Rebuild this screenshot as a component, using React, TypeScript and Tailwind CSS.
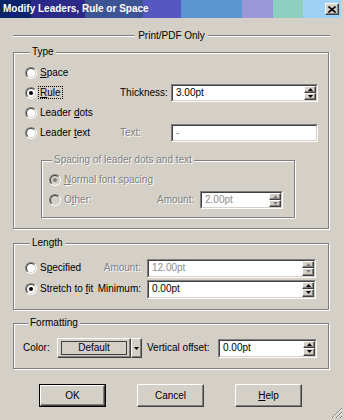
import type { ReactNode } from 'react';

const raised =
  'border border-t-white border-l-white border-r-[#404040] border-b-[#404040] bg-[#d4d0c8] shadow-[inset_-1px_-1px_0_#808080]';
const dim = 'text-[#808080] [text-shadow:1px_1px_0_#fff]';
const etched = 'border border-[#808080] shadow-[1px_1px_0_#fff,inset_1px_1px_0_#fff]';

function Radio({ checked = false, disabled = false }: { checked?: boolean; disabled?: boolean }) {
  return (
    <span className="flex h-[12px] w-[12px] shrink-0 items-center justify-center rounded-full border border-t-[#808080] border-l-[#808080] border-r-white border-b-white">
      <span
        className={`flex h-[10px] w-[10px] items-center justify-center rounded-full border border-t-[#404040] border-l-[#404040] border-r-[#d4d0c8] border-b-[#d4d0c8] ${
          disabled ? 'bg-[#d4d0c8]' : 'bg-white'
        }`}
      >
        {checked && <span className={`h-[4px] w-[4px] rounded-full ${disabled ? 'bg-[#808080]' : 'bg-black'}`} />}
      </span>
    </span>
  );
}

function Arrow({ up = false, disabled = false }: { up?: boolean; disabled?: boolean }) {
  return (
    <svg width="5" height="3" viewBox="0 0 5 3">
      <polygon points={up ? '0,3 5,3 2.5,0' : '0,0 5,0 2.5,3'} fill={disabled ? '#808080' : '#000'} />
    </svg>
  );
}

function Spinner({ disabled = false }: { disabled?: boolean }) {
  return (
    <div className="flex h-full w-[12px] shrink-0 flex-col">
      <div className={`flex flex-1 items-center justify-center ${raised}`}>
        <Arrow up disabled={disabled} />
      </div>
      <div className={`flex flex-1 items-center justify-center ${raised}`}>
        <Arrow disabled={disabled} />
      </div>
    </div>
  );
}

function Field({
  value,
  className,
  disabled = false,
  spin = true,
}: {
  value: string;
  className: string;
  disabled?: boolean;
  spin?: boolean;
}) {
  return (
    <div className={`flex shrink-0 border border-t-[#808080] border-l-[#808080] border-r-white border-b-white ${className}`}>
      <div className="flex min-w-0 flex-1 items-center border border-t-[#404040] border-l-[#404040] border-r-[#d4d0c8] border-b-[#d4d0c8] bg-white">
        <span className={`flex-1 pl-[3px] ${disabled ? 'text-[#8c8c8c]' : 'text-black'}`}>{value}</span>
        {spin && <Spinner disabled={disabled} />}
      </div>
    </div>
  );
}

function Option({
  children,
  checked,
  disabled,
  className,
}: {
  children: ReactNode;
  checked?: boolean;
  disabled?: boolean;
  className: string;
}) {
  return (
    <label className={`flex shrink-0 items-center gap-[3px] ${className}`}>
      <Radio checked={checked} disabled={disabled} />
      <span className={disabled ? dim : ''}>{children}</span>
    </label>
  );
}

function Button({ children, isDefault = false }: { children: ReactNode; isDefault?: boolean }) {
  return (
    <div className={`h-[23px] w-[67px] ${isDefault ? 'border border-black' : ''}`}>
      <div className={`flex h-full w-full items-center justify-center ${raised}`}>{children}</div>
    </div>
  );
}

export default function App() {
  return (
    <div className="relative flex h-[420px] w-[344px] flex-col bg-[#d4d0c8] font-['Liberation_Sans',Arial,sans-serif] text-[10px] leading-[12px] text-black">
      <div className="flex h-[18px] w-[341px] items-center justify-between bg-[linear-gradient(90deg,#0a246a_0%,#0a246a_9%,#2b2a8a_9%,#2b2a8a_25%,#3d5494_25%,#3d5494_42%,#5458c0_42%,#5458c0_53%,#5b95d2_53%,#5b95d2_71%,#9a98d8_71%,#9a98d8_80%,#8ecfc0_80%,#8ecfc0_89%,#9fd0f6_89%,#9fd0f6_100%)] pl-[3px] pr-[2px]">
        <span className="font-bold text-white">Modify Leaders, Rule or Space</span>
        <div className={`flex h-[12px] w-[14px] items-center justify-center ${raised}`}>
          <svg width="8" height="7" viewBox="0 0 8 7">
            <path d="M0.5 0.5 L7.5 6.5 M7.5 0.5 L0.5 6.5" stroke="#000" strokeWidth="1.6" />
          </svg>
        </div>
      </div>

      <div className="ml-[13px] mt-[12px] flex h-[12px] w-[317px] items-center">
        <div className="h-[2px] flex-1 border-t border-b border-t-[#808080] border-b-white" />
        <span className="px-[3px]">Print/PDF Only</span>
        <div className="h-[2px] flex-1 border-t border-b border-t-[#808080] border-b-white" />
      </div>

      <fieldset className={`ml-[13px] mt-[4px] w-[316px] pb-[10px] pl-[11px] pt-[5px] ${etched}`}>
        <legend className="ml-[5px] h-[12px] bg-[#d4d0c8] px-[2px]">Type</legend>
        <div className="flex h-[20px] items-center">
          <Option className="w-[95px]">
            <u>S</u>pace
          </Option>
        </div>
        <div className="flex h-[20px] items-center">
          <Option className="w-[95px]" checked>
            <span className="-mx-[2px] border border-dotted border-black px-[1px]">
              <u>R</u>ule
            </span>
          </Option>
          <span className="w-[51px]">Thickness:</span>
          <Field value="3.00pt" className="h-[18px] w-[147px]" />
        </div>
        <div className="flex h-[20px] items-center">
          <Option className="w-[95px]">
            Leader <u>d</u>ots
          </Option>
        </div>
        <div className="flex h-[20px] items-center">
          <Option className="w-[95px]">
            Leader <u>t</u>ext
          </Option>
          <span className={`w-[51px] ${dim}`}>Text:</span>
          <Field value="-" className="h-[18px] w-[147px]" disabled spin={false} />
        </div>

        <fieldset className={`ml-[16px] mt-[11px] w-[254px] pb-[7px] pl-[7px] pt-[4px] ${etched}`}>
          <legend className={`ml-[3px] h-[12px] bg-[#d4d0c8] px-[2px] ${dim}`}>Spacing of leader dots and text</legend>
          <div className="flex h-[20px] items-center">
            <Option className="w-[108px]" checked disabled>
              <u>N</u>ormal font spacing
            </Option>
          </div>
          <div className="flex h-[20px] items-center">
            <Option className="w-[108px]" disabled>
              O<u>t</u>her:
            </Option>
            <span className={`w-[43px] ${dim}`}>Amount:</span>
            <Field value="2.00pt" className="h-[18px] w-[83px]" disabled />
          </div>
        </fieldset>
      </fieldset>

      <fieldset className={`ml-[13px] mt-[8px] flex w-[316px] flex-col gap-[1px] pb-[10px] pl-[11px] pt-[9px] ${etched}`}>
        <legend className="ml-[5px] h-[12px] bg-[#d4d0c8] px-[2px]">Length</legend>
        <div className="flex h-[20px] items-center">
          <Option className="w-[70px]">
            S<u>p</u>ecified
          </Option>
          <span className={`w-[46px] text-right ${dim}`}>Amount:</span>
          <Field value="12.00pt" className="ml-[6px] h-[19px] w-[169px]" disabled />
        </div>
        <div className="flex h-[20px] items-center">
          <Option className="w-[70px]" checked>
            Stretch to <u>f</u>it
          </Option>
          <span className="w-[46px] text-right">Minimum:</span>
          <Field value="0.00pt" className="ml-[6px] h-[19px] w-[169px]" />
        </div>
      </fieldset>

      <fieldset className={`ml-[13px] mt-[7px] w-[316px] pb-[10px] pl-[9px] pt-[9px] ${etched}`}>
        <legend className="ml-[5px] h-[12px] bg-[#d4d0c8] px-[2px]">Formatting</legend>
        <div className="flex h-[20px] items-center">
          <span className="w-[34px]">Color:</span>
          <div className={`flex h-[20px] w-[74px] items-center justify-center ${raised}`}>
            <span className="flex h-[14px] w-[66px] items-center justify-center border border-[#404040]">Default</span>
          </div>
          <div className={`flex h-[20px] w-[11px] items-center justify-center ${raised}`}>
            <Arrow />
          </div>
          <span className="ml-[5px] w-[71px]">Vertical offset:</span>
          <Field value="0.00pt" className="h-[19px] w-[99px]" />
        </div>
      </fieldset>

      <div className="ml-[39px] mt-[15px] flex gap-[31px]">
        <Button isDefault>OK</Button>
        <Button>Cancel</Button>
        <Button>
          <span>
            <u>H</u>elp
          </span>
        </Button>
      </div>

      <svg className="absolute bottom-[1px] right-[1px]" width="12" height="12" viewBox="0 0 12 12">
        <path d="M11 1 L1 11 M11 5 L5 11 M11 9 L9 11" stroke="#808080" strokeWidth="1" />
        <path d="M11 2 L2 11 M11 6 L6 11 M11 10 L10 11" stroke="#fff" strokeWidth="1" />
      </svg>
    </div>
  );
}
